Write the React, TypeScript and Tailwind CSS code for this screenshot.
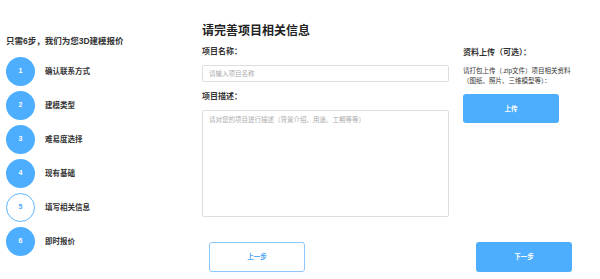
const steps = [
  { n: "1", label: "确认联系方式" },
  { n: "2", label: "建模类型" },
  { n: "3", label: "难易度选择" },
  { n: "4", label: "现有基础" },
  { n: "5", label: "填写相关信息", current: true },
  { n: "6", label: "即时报价" },
];

export default function App() {
  return (
    <div className="flex h-[279px] w-[600px] overflow-hidden bg-white text-[#333] font-['Liberation_Sans','Noto_Sans_CJK_SC',sans-serif]">
      {/* steps sidebar */}
      <aside className="w-[202px] shrink-0 pl-[6px] pt-[36px]">
        <h3 className="text-[8.5px] font-bold leading-[11px] text-[#333]">只需6步，我们为您3D建模报价</h3>
        <ul className="mt-[10px] flex flex-col gap-[5px]">
          {steps.map((s) => (
            <li key={s.n} className="flex items-center">
              <span
                className={
                  s.current
                    ? "flex h-[29px] w-[29px] items-center justify-center rounded-full border-[1.5px] border-[#5db5ff] bg-white text-[7px] font-bold text-[#4aa8f8]"
                    : "flex h-[29px] w-[29px] items-center justify-center rounded-full bg-[#4dadff] text-[7px] font-bold text-white"
                }
              >
                {s.n}
              </span>
              <span className="ml-[10px] text-[7.5px] font-bold text-[#333]">{s.label}</span>
            </li>
          ))}
        </ul>
      </aside>

      {/* form area */}
      <section className="flex flex-1 flex-col">
        <div className="flex">
          <div className="w-[247px] shrink-0 pt-[23px]">
            <h2 className="text-[12px] font-bold leading-[16px] text-[#222]">请完善项目相关信息</h2>
            <p className="mt-[8px] text-[8px] font-bold leading-[10px]">项目名称：</p>
            <div className="mt-[8px] flex h-[17px] items-center rounded-[2px] border border-[#dedede] px-[6px]">
              <span className="text-[6.5px] text-[#aaa]">请输入项目名称</span>
            </div>
            <p className="mt-[10px] text-[8px] font-bold leading-[10px]">项目描述：</p>
            <div className="mt-[8px] h-[107px] rounded-[2px] border border-[#dedede] px-[6px] pt-[4px] text-[6.5px] leading-[9px] text-[#aaa]">
              请对您的项目进行描述（背景介绍、用途、工期等等）
            </div>
          </div>

          <div className="ml-[14px] w-[120px] pt-[48px]">
            <p className="text-[8px] font-bold leading-[10px] text-[#333]">资料上传（可选）：</p>
            <p className="mt-[8px] text-[6.5px] leading-[10px] text-[#333]">
              请打包上传（.zip文件）项目相关资料
              <br />
              （图纸、照片、三维模型等）：
            </p>
            <button className="mt-[8px] flex h-[29px] w-[96px] items-center justify-center rounded-[3px] bg-[#4dadff] text-[6.5px] font-bold text-white">
              上传
            </button>
          </div>
        </div>

        <div className="mt-[25px] flex pr-[28px]">
          <button className="ml-[7px] flex h-[30px] w-[96px] items-center justify-center rounded-[3px] border-[1.5px] border-[#8ac8ff] bg-white text-[6.5px] font-bold text-[#4aa3f2]">
            上一步
          </button>
          <button className="ml-auto flex h-[30px] w-[96px] items-center justify-center rounded-[3px] bg-[#4dadff] text-[6.5px] font-bold text-white">
            下一步
          </button>
        </div>
      </section>
    </div>
  );
}
